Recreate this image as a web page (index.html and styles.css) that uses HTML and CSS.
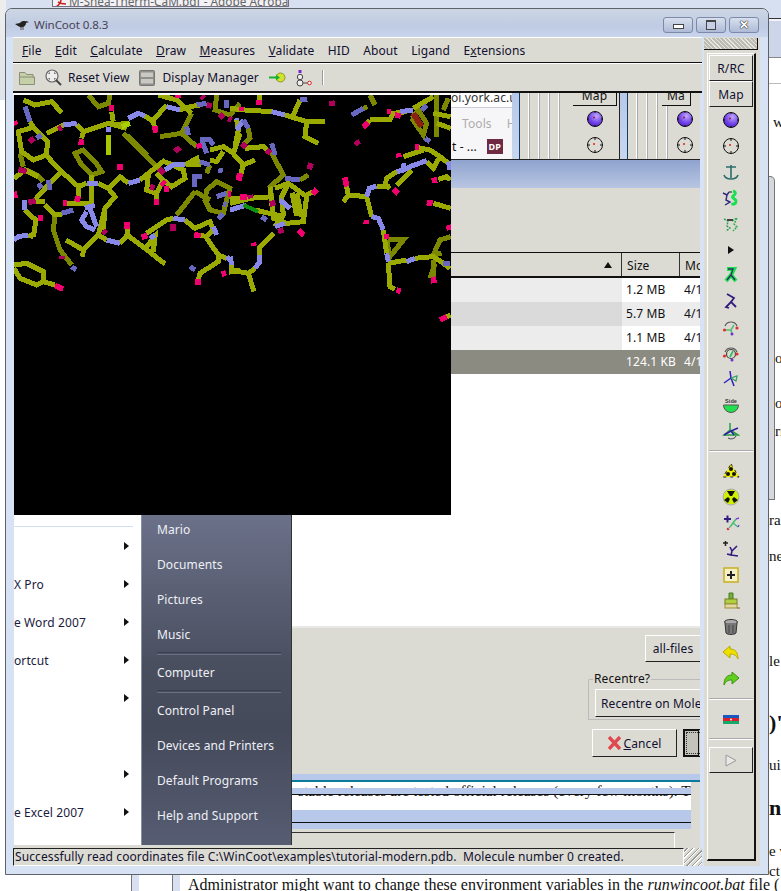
FILE: index.html
```html
<!DOCTYPE html>
<html lang="en">
<head>
    <meta charset="UTF-8">
    <meta name="viewport" content="width=device-width, initial-scale=1.0">
    <title>WinCoot 0.8.3</title>
    <link rel="stylesheet" href="styles.css">
</head>
<body>

<!-- desktop behind the coot window -->
<div class="desk-top"></div>
<div class="desk-left"></div>
<div class="acrobat-tab">
    <svg class="pdf-mark" viewBox="0 0 12 8"><path d="M1 7 C4 5 6 3 6 0 M3 2 C6 4 8 4 11 4" fill="none" stroke="#c8201c" stroke-width="1.6"/></svg>
    <span>M-Shea-Therm-CaM.pdf - Adobe Acrobat</span>
</div>

<div class="doc-edge">
    <div class="edge-strip"></div>
    <div class="edge-line"></div>
    <span class="peek r-w">w</span>
    <div class="edge-panel"></div>
    <span class="peek r-a">oc</span>
    <span class="peek r-b">o</span>
    <span class="peek r-c">rr</span>
    <span class="peek r-d">ra</span>
    <span class="peek r-e">ne</span>
    <span class="peek r-f">le</span>
    <span class="peek r-g big">)'</span>
    <span class="peek r-h">ui</span>
    <span class="peek r-i big">n</span>
    <span class="peek r-j">e v</span>
    <span class="peek r-k">ct</span>
</div>

<div class="doc-bottom">
    <div class="gutter-a"></div>
    <div class="gutter-gap"></div>
    <div class="gutter-b"></div>
    <p>Administrator might want to change these environment variables in the <i>runwincoot.bat</i> file (</p>
</div>

<!-- coot main window -->
<div class="window">
    <div class="titlebar">
        <svg class="bird" viewBox="0 0 14 10"><path d="M0 4 L5 3 C7 0 11 1 14 2 L11 3 C11 6 8 8 5 7 L3 6 Z" fill="#222"/><path d="M6 7 V10 M8 7 V10" stroke="#555"/></svg>
        <span class="title-text">WinCoot 0.8.3</span>
        <div class="win-buttons">
            <div class="win-btn"><span class="ico-min"></span></div>
            <div class="win-btn"><span class="ico-max"></span></div>
            <div class="win-btn"><span class="ico-close">✕</span></div>
        </div>
    </div>

    <div class="window-body">
        <div class="main-col">
            <div class="menubar">
                <span><u>F</u>ile</span>
                <span><u>E</u>dit</span>
                <span><u>C</u>alculate</span>
                <span><u>D</u>raw</span>
                <span><u>M</u>easures</span>
                <span><u>V</u>alidate</span>
                <span>HID</span>
                <span>About</span>
                <span>Ligand</span>
                <span>E<u>x</u>tensions</span>
            </div>

            <div class="toolbar">
                <svg class="tb-folder" viewBox="0 0 16 14"><path d="M0.5 13.5 V1.5 H6 L7.5 3.5 H14 V6 H15.5 V13.5 Z" fill="#c5cfa8" stroke="#8a9078"/><path d="M1 6 H15" stroke="#8a9078"/></svg>
                <svg class="tb-zoom" viewBox="0 0 17 17"><circle cx="7" cy="7" r="6" fill="#eee" stroke="#666" stroke-width="1.2"/><path d="M4 5 V4 H5 M9 4 H10 V5 M10 9 V10 H9 M5 10 H4 V9" fill="none" stroke="#555"/><path d="M11 11 L16 16" stroke="#444" stroke-width="2"/></svg>
                <span class="tb-label reset">Reset View</span>
                <svg class="tb-display" viewBox="0 0 16 16"><rect x="0.5" y="0.5" width="15" height="15" rx="1" fill="#8f8f8c" stroke="#777"/><rect x="2" y="2.5" width="12" height="4.5" fill="#c9c9c4"/><rect x="2" y="9" width="12" height="4.5" fill="#c9c9c4"/></svg>
                <span class="tb-label">Display Manager</span>
                <svg class="tb-go" viewBox="0 0 17 11"><circle cx="11.5" cy="5.5" r="4.5" fill="#d4e030" stroke="#8a9a20"/><path d="M0 5.5 H9" stroke="#18b030" stroke-width="2"/><path d="M7 2.5 L11 5.5 L7 8.5 Z" fill="#18b030"/></svg>
                <svg class="tb-mol" viewBox="0 0 17 18"><circle cx="5" cy="8" r="2.7" fill="#eee" stroke="#444"/><circle cx="5" cy="14" r="3" fill="#eee" stroke="#444"/><path d="M8 14 H13" stroke="#444"/><circle cx="14.5" cy="14" r="1.8" fill="#fff" stroke="#d02020"/><rect x="3.5" y="1" width="3" height="3" fill="#7a20d0"/></svg>
                <div class="tb-sep"></div>
            </div>

            <div class="stage">
                <!-- things seen through the window, top to bottom -->
                <div class="back-strip">
                    <div class="browser-bit">
                        <div class="url">oi.york.ac.u</div>
                        <div class="browser-menu"><span>Tools</span><span>Help</span></div>
                        <div class="browser-tabs"><span>t - ...</span><b class="dp">DP</b><span>Dpr</span></div>
                    </div>
                    <div class="blue-bar"></div>
                    <div class="coot-ghost wide">
                        <div class="ghost-map">Map</div>
                        <svg class="ghost-ico" viewBox="0 0 18 18"><use href="#sphere"/></svg>
                        <svg class="ghost-ico" viewBox="0 0 18 18"><use href="#target"/></svg>
                    </div>
                    <div class="blue-bar"></div>
                    <div class="coot-ghost narrow">
                        <div class="ghost-map">Ma</div>
                        <svg class="ghost-ico" viewBox="0 0 18 18"><use href="#sphere"/></svg>
                        <svg class="ghost-ico" viewBox="0 0 18 18"><use href="#target"/></svg>
                    </div>
                </div>
                <div class="dialog-title"></div>
                <div class="chooser-top"></div>
                <div class="file-head">
                    <div class="fh-name"><span class="sort-up"></span></div>
                    <div class="fh-size">Size</div>
                    <div class="fh-mod">Mo</div>
                </div>
                <div class="file-row"><div class="c-name"></div><div class="c-size">1.2 MB</div><div class="c-mod">4/1</div></div>
                <div class="file-row alt"><div class="c-name"></div><div class="c-size">5.7 MB</div><div class="c-mod">4/1</div></div>
                <div class="file-row"><div class="c-name"></div><div class="c-size">1.1 MB</div><div class="c-mod">4/1</div></div>
                <div class="file-row picked"><div class="c-name"></div><div class="c-size">124.1 KB</div><div class="c-mod">4/1</div></div>
                <div class="file-blank"></div>
                <div class="chooser-foot">
                    <div class="gtk-btn all-files">all-files</div>
                    <fieldset class="recentre">
                        <legend>Recentre?</legend>
                        <div class="gtk-btn recentre-btn">Recentre on Mole</div>
                    </fieldset>
                    <div class="action-row">
                        <div class="gtk-btn cancel">
                            <svg class="cancel-x" viewBox="0 0 13 14"><path d="M1 1 L12 13 M12 1 L1 13" stroke="#e04850" stroke-width="3.4"/></svg>
                            <span><u>C</u>ancel</span>
                        </div>
                        <div class="ok-btn"><div class="ok-focus"></div></div>
                    </div>
                </div>
                <div class="back-stripes">
                    <div class="st-blue a"></div>
                    <div class="st-page">
                        <div class="st-text">stable releases are tested official releases (every few months). T</div>
                        <div class="st-blue b"></div>
                    </div>
                    <div class="st-blue c"></div>
                    <div class="st-blue d"></div>
                    <div class="st-gray"></div>
                </div>

                <!-- molecule view -->
                <svg class="gl-canvas" viewBox="14 95 437 420" shape-rendering="crispEdges">
                    <g transform="translate(10 90) scale(0.3333)" fill="none" stroke-width="15">
                        <g stroke="#7c8900">
                            <path d="M235 15 L265 50 L295 40 L300 15"/>
                            <path d="M195 190 L220 180 L255 215 L275 245 L245 255 L215 225 Z"/>
                            <path d="M340 130 L400 190 L450 240"/><path d="M352 135 L412 195"/>
                            <path d="M450 140 L515 130 L545 70 M515 130 L560 170"/>
                            <path d="M135 375 L130 420 L150 480 L185 525"/>
                            <path d="M555 305 L520 350 L500 375"/>
                            <path d="M590 300 L620 275 L660 295 L650 330 L640 370 L600 360 L585 330 Z"/>
                            <path d="M555 305 L600 330 M590 250 L600 225"/>
                            <path d="M50 240 L85 258 L100 275 M30 190 L40 230"/>
                            <path d="M620 15 L615 60 L660 75 L690 40"/>
                        </g>
                        <g stroke="#9aaa00">
                            <path d="M40 30 L75 45 L125 35 L155 68"/>
                            <path d="M60 95 L70 112 L25 125 L35 185 L70 210 L110 195 L112 155 L70 112"/>
                            <path d="M112 200 L155 245 L205 290 L205 320"/>
                            <path d="M155 245 L110 290 L70 335 M12 265 L45 240 L85 260"/>
                            <path d="M110 130 L160 105 M200 105 L220 125 L295 100 L350 115 M220 125 L215 145"/>
                            <path d="M305 65 L310 95 M300 105 L355 100"/>
                            <path d="M405 78 L430 95 L433 110 M430 90 L470 45 M445 15 L500 30 L545 70"/>
                            <path d="M205 290 L230 280 M245 255 L245 350 M265 280 L295 295 L330 260 L355 280"/>
                            <path d="M390 270 L415 250 L465 210 M295 295 L315 320 L285 355 L280 420"/>
                            <path d="M415 255 L410 300 L440 310 L460 270 L440 250 M440 310 L440 330"/>
                            <path d="M465 215 L520 240 L525 265 L485 290 L460 270 M525 225 L560 205 L565 225 L530 225"/>
                            <path d="M165 340 L245 340 M105 345 L135 375 L155 375 M75 335 L105 335"/>
                            <path d="M45 360 L65 380 L78 390 L70 440 M55 435 L70 440"/>
                            <path d="M168 450 L220 480 L265 435 L285 355 M220 480 L218 500"/>
                            <path d="M265 435 L290 450 M330 460 L352 435 L352 415 M352 435 L405 475 L465 522"/>
                            <path d="M405 475 L435 440 L430 485 M410 430 L470 390 L490 385"/>
                            <path d="M525 390 L555 415 L600 395 L610 420 L590 440 L570 435"/>
                            <path d="M590 445 L625 495 L625 515 L570 550 L565 570 M625 495 L650 505 M665 520 L665 545 L690 540"/>
                            <path d="M12 525 L50 520 L100 545 L100 575 L80 585 L30 565 L12 535 M100 575 L135 585"/>
                            <path d="M660 325 L690 325 M510 60 L540 50 L570 45"/>
                            <path d="M690 130 L670 190 L640 170 L600 180 M640 185 L620 215 L600 210"/>
                        </g>
                        <path d="M295 135 L295 195" stroke="#a8c800" stroke-width="15"/>
                        <path d="M335 110 L360 100" stroke="#a8d000"/>
                        <g stroke="#8888e8">
                            <path d="M160 105 L200 100 M355 85 L385 70 L405 78 M470 50 L490 55 L510 60"/>
                            <path d="M230 280 L265 280 M355 280 L390 270 M465 240 L490 225 L525 225"/>
                            <path d="M45 330 L45 360 M12 450 L25 440 L55 435"/>
                            <path d="M225 355 L255 345 M240 355 L260 410 M230 365 L215 390 L230 410 L255 420"/>
                            <path d="M290 450 L330 460 M420 445 L435 435 M490 385 L525 390 M610 410 L620 435"/>
                            <path d="M650 500 L665 515 M680 85 L685 125 M288 118 L302 118"/>
                        </g>
                        <g stroke="#6868c0">
                            <path d="M45 50 L60 95 M115 270 L120 300 M85 280 L95 295 M155 370 L190 360"/>
                            <path d="M185 530 L198 540 M555 290 L555 260 L575 260 M620 320 L650 310 M640 340 L650 345 M625 385 L640 370"/>
                            <path d="M560 45 L590 40 M650 30 L650 55 M570 150 L600 150 L610 165 M575 150 L590 190 M530 110 L535 135"/>
                            <path d="M570 215 L600 225 M630 235 L632 248 M80 145 L95 135 M540 530 L555 540"/>
                        </g>
                        <g stroke="#f0006e" stroke-width="17">
                            <path d="M305 45 L305 62 M215 148 L213 165 M435 108 L437 128 M330 222 L330 240 M205 318 L200 335"/>
                            <path d="M352 395 L352 416 M440 328 L440 345 M455 275 L465 285 M470 288 L470 305 M395 442 L412 436"/>
                            <path d="M553 435 L572 437 M160 340 L172 340 M85 385 L98 385 M135 587 L160 597 M635 553 L648 548 M565 568 L565 585 M655 312 L662 312 M565 160 L570 175"/>
                            <path d="M12 95 L18 105 M685 255 L688 270 M12 305 L16 325 M505 15 L505 25"/>
                        </g>
                        <g stroke="#b0005c" stroke-width="17">
                            <path d="M58 155 L72 145 M495 185 L510 172 M25 238 L50 245 M55 337 L77 333 M448 235 L462 250 M490 402 L490 422"/>
                            <path d="M278 422 L288 432 M590 45 L605 48 M575 18 L582 25 M628 72 L640 85 M420 290 L434 294 M157 498 L157 508 M655 85 L665 90 M145 118 L155 112"/>
                        </g>
                    </g>
                    <g transform="translate(230 90) scale(0.3333)" fill="none" stroke-width="15">
                        <g stroke="#7c8900">
                            <path d="M55 115 L60 145 L40 165 M120 180 L160 255 L120 290 L125 320 M210 270 L235 255 M420 15 L435 45 M400 55 L412 50"/>
                            <path d="M545 85 L580 135 L590 100 L565 60 L545 85 M620 15 L620 140 M655 25 L640 60"/>
                            <path d="M475 450 L520 450 L480 500 L470 450 M662 440 L630 450 L610 495 L635 490 M610 510 L610 570"/>
                            <path d="M600 565 L615 520"/>
                        </g>
                        <g stroke="#9aaa00">
                            <path d="M0 55 L45 60 L125 65 M165 75 L230 95 L285 95 M230 95 L225 140 L265 160 M190 75 L210 30 M88 15 L88 30"/>
                            <path d="M20 90 L25 120 L15 170 M45 175 L100 170 L115 185 M0 180 L40 225 L75 210 M40 225 L33 250"/>
                            <path d="M135 295 L175 280 L230 320 L220 395 L170 400 L130 385 L120 290 M230 315 L250 305 M175 280 L155 320 L160 375 L135 410 M200 310 L215 380 M186 308 L200 378"/>
                            <path d="M0 340 L60 325 L130 320 M75 360 L160 380 M130 430 L90 470 L90 495 M55 550 L0 540 M75 535 L55 550 L72 605"/>
                            <path d="M350 290 L355 315 L340 335 M355 315 L410 320 L425 380 M440 288 L480 290"/>
                            <path d="M460 420 L470 490 M475 520 L480 590 L495 598 M475 520 L530 510 M555 505 L610 500 L640 520 L660 535"/>
                            <path d="M420 90 L480 88 L490 70 L530 65 M400 110 L420 90 M550 55 L610 20 M620 100 L662 115 M610 70 L662 80"/>
                            <path d="M560 172 L600 180 L630 200 L610 235 L590 215 M630 200 L655 220 M520 200 L580 180"/>
                            <path d="M500 245 L470 265 L465 285 L480 295 M545 240 L500 285 M625 268 L650 260 L662 270 M610 340 L662 355 M650 680 L662 675"/>
                        </g>
                        <g stroke="#8888e8">
                            <path d="M125 65 L165 75 M20 120 L40 90 M0 360 L50 345 M150 330 L180 355 M135 410 L165 400 M90 495 L90 515 L75 535 M0 500 L5 525"/>
                            <path d="M410 320 L418 295 L440 288 M425 380 L445 385 L460 420 M470 490 L475 515 M530 515 L555 505 M510 65 L550 60"/>
                            <path d="M655 215 L660 240 M590 212 L545 228 L520 240 L500 245 M520 220 L522 238"/>
                        </g>
                        <g stroke="#6868c0">
                            <path d="M40 90 L55 115 M125 160 L135 195 M165 265 L210 270 M365 75 L400 55 M585 145 L600 155 M575 60 L590 45 M660 520 L640 520 M95 380 L110 390"/>
                            <path d="M210 30 L232 28"/>
                        </g>
                        <path d="M40 345 L85 365" stroke="#109010" stroke-width="12"/>
                        <path d="M550 70 L575 110" stroke="#8a2010" stroke-width="18"/>
                        <g stroke="#f0006e" stroke-width="17">
                            <path d="M35 50 L35 62 M88 30 L88 45 M30 250 L28 272 M30 322 L52 320 M70 458 L72 468 M205 420 L222 435 M260 298 L248 312"/>
                            <path d="M345 262 L350 290 M400 112 L415 98 M470 65 L482 65 M495 75 L512 78 M410 390 L408 402 M462 440 L478 440 M490 298 L505 310 M500 600 L512 604"/>
                            <path d="M555 172 L567 172 M505 190 L507 202 M605 272 L622 270 M590 338 L608 340 M655 405 L660 420 M630 690 L650 680 M610 560 L612 580"/>
                        </g>
                        <g stroke="#b0005c" stroke-width="17">
                            <path d="M36 172 L48 160 M110 180 L122 190 M243 220 L237 238 M60 315 L62 325 M125 332 L130 348 M150 415 L155 430 M305 32 L307 48 M378 152 L386 165"/>
                        </g>
                    </g>
                </svg>

                <!-- start menu bit -->
                <div class="start-menu">
                    <div class="start-left">
                        <div class="start-rule"></div>
                        <div class="start-row"><span></span><i></i></div>
                        <div class="start-row"><span>X Pro</span><i></i></div>
                        <div class="start-row"><span>e Word 2007</span><i></i></div>
                        <div class="start-row"><span>ortcut</span><i></i></div>
                        <div class="start-row"><span></span><i></i></div>
                        <div class="start-row"><span></span></div>
                        <div class="start-row"><span></span><i></i></div>
                        <div class="start-row"><span>e Excel 2007</span><i></i></div>
                    </div>
                    <div class="start-right">
                        <div class="start-item first">Mario</div>
                        <div class="start-item">Documents</div>
                        <div class="start-item">Pictures</div>
                        <div class="start-item">Music</div>
                        <div class="start-line"></div>
                        <div class="start-item">Computer</div>
                        <div class="start-line"></div>
                        <div class="start-item">Control Panel</div>
                        <div class="start-item">Devices and Printers</div>
                        <div class="start-item">Default Programs</div>
                        <div class="start-item">Help and Support</div>
                    </div>
                </div>
            </div>

            <div class="statusbar">
                <div class="status-text">Successfully read coordinates file C:\WinCoot\examples\tutorial-modern.pdb.&nbsp; Molecule number 0 created.</div>
                <div class="grip"></div>
            </div>
        </div>

        <!-- right hand tool column -->
        <div class="side-col">
            <div class="dock-handle"></div>
            <div class="side-box">
                <div class="gtk-btn side-btn">R/RC</div>
                <div class="gtk-btn side-btn">Map</div>

                <div class="tool"><svg viewBox="0 0 18 18"><defs>
                    <radialGradient id="ball" cx="0.6" cy="0.3" r="0.8"><stop offset="0" stop-color="#c0a8ff"/><stop offset="0.6" stop-color="#7040e8"/><stop offset="1" stop-color="#4818c0"/></radialGradient>
                    <g id="sphere"><circle cx="9" cy="9" r="7.5" fill="url(#ball)" stroke="#111"/><path d="M9 1 V3 M9 15 V17 M1 9 H3 M15 9 H17" stroke="#111"/><circle cx="8" cy="7.5" r="1" fill="#a02040"/></g>
                    <g id="target"><circle cx="9" cy="9" r="7.5" fill="#dcdcd4" stroke="#111"/><path d="M9 1 V4 M9 14 V17 M1 9 H4 M14 9 H17" stroke="#111"/><circle cx="8" cy="8" r="1" fill="#e02010"/></g>
                </defs><use href="#sphere"/></svg></div>
                <div class="tool"><svg viewBox="0 0 18 18"><use href="#target"/></svg></div>
                <div class="tool"><svg viewBox="0 0 18 18"><path d="M4 4 H14 M9 2 V15 M2 12 C3 15 6 16 9 16 C12 16 15 15 16 12" fill="none" stroke="#2c6e68" stroke-width="1.6"/></svg></div>
                <div class="tool"><svg viewBox="0 0 18 18"><path d="M1 4 L5 6 L7 3 M5 6 L4 11 L8 13 L3 16" fill="none" stroke="#302880" stroke-width="1.4"/><path d="M11 2 C15 3 13 6 11 7 C9 9 14 10 14 12 C14 15 11 16 10 14" fill="none" stroke="#18e050" stroke-width="3"/><path d="M7 3 H10" stroke="#555" stroke-width="1.5"/></svg></div>
                <div class="tool"><svg viewBox="0 0 18 18"><path d="M2 4 L6 6 L5 11 L8 13 L4 16" fill="none" stroke="#30a050" stroke-width="1.5" stroke-dasharray="2 1"/><path d="M10 6 L15 3 L12 9 L15 12 L11 16" fill="none" stroke="#30b050" stroke-width="1.5" stroke-dasharray="2 1"/><path d="M5 5 H11" stroke="#444" stroke-width="2"/></svg></div>
                <div class="tool short"><svg viewBox="0 0 18 18"><path d="M6 5 L12 9 L6 13 Z" fill="#111"/></svg></div>
                <div class="tool"><svg viewBox="0 0 18 18"><path d="M5 3 L12 3 L9 9 L14 15 M9 9 L4 15" fill="none" stroke="#18e050" stroke-width="4"/><path d="M6 3 L11 3 L9 9 L13 14 M9 9 L5 14" fill="none" stroke="#303060" stroke-width="1.3"/></svg></div>
                <div class="tool"><svg viewBox="0 0 18 18"><path d="M5 2 L12 6 L9 10 L14 15 M9 10 L4 15 L7 16" fill="none" stroke="#301c80" stroke-width="1.8"/></svg></div>
                <div class="tool"><svg viewBox="0 0 18 18"><path d="M3 8 A6.5 6.5 0 0 1 15 8" fill="none" stroke="#555" stroke-width="1.2"/><path d="M12 7 L9 12 L4 12 M9 12 L10 16" fill="none" stroke="#50c070" stroke-width="1.5"/><circle cx="2.5" cy="12" r="1.6" fill="#e03030"/><circle cx="15" cy="10" r="1.6" fill="#e03030"/><circle cx="10" cy="16" r="1.5" fill="#7030d0"/></svg></div>
                <div class="tool"><svg viewBox="0 0 18 18"><path d="M3 8 A6.5 6.5 0 0 1 15 8" fill="none" stroke="#555" stroke-width="1.2"/><circle cx="9" cy="10" r="4.5" fill="none" stroke="#444" stroke-width="1.2"/><path d="M11 7 L8 13" stroke="#30c060" stroke-width="1.8"/><circle cx="2.5" cy="12" r="1.6" fill="#e03030"/><circle cx="15" cy="10" r="1.6" fill="#e03030"/><circle cx="10" cy="16" r="1.5" fill="#7030d0"/></svg></div>
                <div class="tool"><svg viewBox="0 0 18 18"><path d="M8 1 L9 8 L2 13 M9 8 L12 16" fill="none" stroke="#3020c0" stroke-width="1.5"/><path d="M9 8 L15 6 L14 11 L9 8" fill="none" stroke="#30a060" stroke-width="1.2"/></svg></div>
                <div class="tool"><svg viewBox="0 0 18 18"><path d="M1.5 9 A7.5 7.5 0 0 0 16.5 9 Z" fill="#20e050" stroke="#555"/><text x="9" y="7" class="side-word">Side</text></svg></div>
                <div class="tool"><svg viewBox="0 0 18 18"><path d="M8 1 L8 8 L2 13 H16 L8 8" fill="none" stroke="#20a040" stroke-width="1.5"/><path d="M2 13 L9 9 L16 6 M9 9 L12 13" fill="none" stroke="#3020a0" stroke-width="1.5"/><path d="M14 14 A5 4 0 0 1 6 16" fill="none" stroke="#444"/></svg></div>

                <div class="side-rule"></div>

                <div class="tool"><svg viewBox="0 0 18 18"><path d="M9 2 L17 15 H1 Z" fill="#f0f000" stroke="#222" stroke-dasharray="3 4"/><circle cx="9" cy="7" r="2" fill="#111"/><circle cx="6" cy="12" r="2" fill="#111"/><circle cx="12" cy="12" r="2" fill="#111"/></svg></div>
                <div class="tool"><svg viewBox="0 0 18 18"><circle cx="9" cy="9" r="8" fill="#d0f000" stroke="#aab"/><path d="M5 3 L13 3 L10 8 H8 Z M2 12 L6 9 L8 11 L6 15 Z M16 12 L12 9 L10 11 L12 15 Z" fill="#111"/></svg></div>
                <div class="tool"><svg viewBox="0 0 18 18"><path d="M2 5 H9 M5.5 1.5 V8.5" stroke="#301c80" stroke-width="2"/><path d="M8 13 L11 9 L14 5 M11 9 L16 13" fill="none" stroke="#40c070" stroke-width="1.5"/><path d="M14 5 L17 4 M16 13 L17 11" stroke="#8040e0" stroke-width="1.5"/><circle cx="6" cy="15" r="1.3" fill="#e03030"/><path d="M6 15 L8 13" stroke="#888"/></svg></div>
                <div class="tool"><svg viewBox="0 0 18 18"><path d="M1 3 H6 M3.5 1 V6" stroke="#222" stroke-width="1.5"/><path d="M8 7 L10 11 L15 6 M10 11 L9 15 L5 14 M9 15 L16 16" fill="none" stroke="#301c80" stroke-width="1.6"/></svg></div>
                <div class="tool"><svg viewBox="0 0 18 18"><rect x="2" y="2" width="14" height="14" fill="#f4f0c8" stroke="#c8b020" stroke-width="1.5"/><path d="M5 9 H13 M9 5 V13" stroke="#222" stroke-width="2"/></svg></div>
                <div class="tool"><svg viewBox="0 0 18 18"><path d="M7 1 H11 V7 H7 Z" fill="#70b040" stroke="#4a7a20"/><rect x="3" y="7" width="12" height="5" fill="#b0d040" stroke="#708020"/><rect x="3" y="12" width="12" height="4" fill="#e0d8a0" stroke="#a09040"/><path d="M15 16 H18" stroke="#806020"/></svg></div>
                <div class="tool"><svg viewBox="0 0 18 18"><ellipse cx="9" cy="4" rx="6.5" ry="2.5" fill="#aaa" stroke="#333"/><path d="M3 5 L4 15 C6 17 12 17 14 15 L15 5" fill="#777" stroke="#333"/><path d="M7 7 V15 M11 7 V15" stroke="#444"/></svg></div>
                <div class="tool"><svg viewBox="0 0 18 18"><path d="M1 8 L8 2 V5 C13 5 16 8 16 15 C14 11 12 10 8 10 V14 Z" fill="#f0e000" stroke="#b8a800"/></svg></div>
                <div class="tool"><svg viewBox="0 0 18 18"><path d="M17 8 L10 2 V5 C5 5 2 8 2 15 C4 11 6 10 10 10 V14 Z" fill="#60d020" stroke="#409010"/></svg></div>

                <div class="side-rule"></div>

                <div class="tool"><svg viewBox="0 0 18 18"><rect x="1" y="5" width="16" height="3" fill="#1858c0"/><rect x="1" y="8" width="16" height="3" fill="#d82030"/><rect x="1" y="11" width="16" height="3" fill="#18a868"/><circle cx="9" cy="9.5" r="1" fill="#eee"/></svg></div>

                <div class="side-rule last"></div>

                <div class="gtk-btn side-play"><svg viewBox="0 0 12 13"><path d="M1 1 L11 6.5 L1 12 Z" fill="#e8e8e4" stroke="#999"/></svg></div>
            </div>
        </div>
    </div>
</div>

</body>
</html>
```

FILE: styles.css
```css
/* whole picture is a desktop with overlapping windows, so windows are placed by hand */
body {
    margin: 0;
    width: 781px;
    height: 891px;
    position: relative;
    overflow: hidden;
    background-color: #fff;
    font-family: "Noto Sans", sans-serif;
    font-size: 12px;
    letter-spacing: 0.1px;
    color: #111;
}

u {
    text-underline-offset: 1px;
}

/* behind the window */
.desk-top {
    position: absolute;
    left: 0;
    top: 0;
    width: 781px;
    height: 12px;
    background-color: #d6e0f0;
}

.desk-left {
    position: absolute;
    left: 0;
    top: 0;
    width: 6px;
    height: 100px;
    background: linear-gradient(#eee, #dfe3ea);
}

.acrobat-tab {
    position: absolute;
    left: 52px;
    top: -6px;
    width: 237px;
    height: 13px;
    display: flex;
    align-items: center;
    gap: 2px;
    padding-left: 2px;
    box-sizing: border-box;
    background-color: #f2f2f6;
    border: 1px solid #77707a;
    color: #666;
    font-size: 11.8px;
    letter-spacing: 0;
    white-space: nowrap;
    overflow: hidden;
}

.pdf-mark {
    width: 12px;
    height: 8px;
    margin-top: 6px;
    flex: none;
}

.doc-edge {
    position: absolute;
    left: 768px;
    top: 0;
    width: 13px;
    height: 891px;
    overflow: hidden;
    font-family: "Liberation Serif", serif;
    font-size: 15px;
}

.edge-strip {
    height: 57px;
    background: linear-gradient(#d6e0f0 18px, #333 18px, #333 19px, #f0f2f8 19px, #f0f2f8 21px, #ccd6e8 21px);
    border-bottom: 1px solid #888;
}

.edge-line {
    margin-top: 25px;
    height: 1px;
    background-color: #bbb;
}

.edge-panel {
    position: absolute;
    left: 0;
    top: 176px;
    width: 7px;
    height: 324px;
    background-color: #d6d8de;
    border: 1px solid #777;
    border-left: none;
    border-radius: 0 5px 0 0;
    box-sizing: border-box;
}

.peek {
    position: absolute;
    left: 1px;
    line-height: 16px;
    white-space: nowrap;
}

.peek.big {
    font-weight: bold;
    font-size: 22px;
}

.r-w { top: 114px; left: 5px; }
.r-a { top: 350px; left: 7px; }
.r-b { top: 395px; left: 7px; }
.r-c { top: 423px; left: 7px; }
.r-d { top: 512px; }
.r-e { top: 548px; }
.r-f { top: 653px; }
.r-g { top: 715px; }
.r-h { top: 757px; }
.r-i { top: 800px; }
.r-j { top: 843px; }
.r-k { top: 866px; line-height: 11px; }

.doc-bottom {
    position: absolute;
    left: 0;
    top: 874px;
    width: 781px;
    height: 17px;
    display: flex;
    overflow: hidden;
}

.gutter-a {
    width: 7px;
    flex: none;
    margin-left: 131px;
    background-color: #d8e0f2;
    border-left: 1px solid #777;
}

.gutter-gap {
    width: 33px;
    flex: none;
}

.gutter-b {
    width: 7px;
    flex: none;
    background-color: #d8e0f2;
    border-left: 1px solid #777;
}

.doc-bottom p {
    margin: 0 0 0 8px;
    padding-top: 4px;
    font-family: "Liberation Serif", serif;
    font-size: 16px;
    letter-spacing: 0;
    line-height: 13px;
    white-space: nowrap;
}

/* coot window */
.window {
    position: absolute;
    left: 5px;
    top: 8px;
    width: 764px;
    height: 867px;
    box-sizing: border-box;
    display: flex;
    flex-direction: column;
    background-color: #d8e2f5;
    border: 1px solid #5c6268;
    border-radius: 7px 7px 0 0;
}

.titlebar {
    height: 28px;
    flex: none;
    display: flex;
    align-items: center;
    padding: 3px 0 0 9px;
    box-sizing: border-box;
    background: linear-gradient(#cdd6e5, #bfcbe2 60%, #c8d5ec);
    border-radius: 6px 6px 0 0;
}

.bird {
    width: 14px;
    height: 10px;
}

.title-text {
    margin-left: 5px;
    font-size: 11.6px;
    letter-spacing: -0.1px;
    color: #4a4356;
}

.win-buttons {
    margin-left: auto;
    margin-right: 9px;
    display: flex;
    gap: 3px;
}

.win-btn {
    width: 30px;
    height: 16px;
    box-sizing: border-box;
    display: flex;
    align-items: center;
    justify-content: center;
    border: 1px solid #7d89a8;
    border-radius: 3px;
    background: linear-gradient(#d8e0ee, #aebbd6);
}

.ico-min {
    width: 9px;
    height: 3px;
    margin-top: 3px;
    border: 1px solid #444;
    background-color: #fff;
}

.ico-max {
    width: 8px;
    height: 7px;
    border: 1px solid #444;
    border-top-width: 2px;
    background-color: #c6d0e6;
    box-sizing: content-box;
}

.ico-close {
    font-size: 12px;
    font-weight: bold;
    line-height: 12px;
    color: #fff;
    text-shadow: 0 0 1px #222, 0 0 1px #222, 0 0 1px #222;
}

.window-body {
    flex: 1;
    display: flex;
    min-height: 0;
    padding: 0 8px 8px 7px;
}

.main-col {
    width: 689px;
    display: flex;
    flex-direction: column;
}

.menubar {
    height: 26px;
    flex: none;
    display: flex;
    align-items: center;
    gap: 13.4px;
    padding-left: 9px;
    background-color: #dcdbd3;
    border-top: 1px solid #fff;
    border-bottom: 1px solid #111;
    box-sizing: border-box;
    color: #101030;
}

.toolbar {
    height: 30px;
    flex: none;
    display: flex;
    align-items: center;
    padding-left: 6px;
    background-color: #dcdbd3;
    border-top: 1px solid #fff;
    border-bottom: 2px solid #111;
    box-sizing: border-box;
    color: #101030;
}

.tb-folder { width: 16px; height: 14px; }
.tb-zoom { width: 17px; height: 17px; margin-left: 10px; }
.tb-label { margin-left: 7px; }
.tb-label.reset { margin-left: 6px; margin-right: 10px; }
.tb-display { width: 16px; height: 16px; }
.tb-go { width: 17px; height: 11px; margin-left: 10px; }
.tb-mol { width: 17px; height: 18px; margin-left: 9px; }

.tb-sep {
    width: 1px;
    height: 15px;
    margin-left: 10px;
    background-color: #999;
    border-right: 1px solid #fff;
}

.stage {
    position: relative;
    flex: 1;
    min-height: 0;
    margin-right: 2px;
    display: flex;
    flex-direction: column;
    background-color: #dcdbd3;
    overflow: hidden;
}

/* stuff seen behind the molecule view */
.back-strip {
    height: 67px;
    flex: none;
    display: flex;
    background-color: #fff;
    padding-left: 438px;
    border-bottom: 1px solid #222;
    box-sizing: border-box;
}

.browser-bit {
    width: 61px;
    flex: none;
    overflow: hidden;
    background-color: #f6f6f8;
    white-space: nowrap;
}

.url {
    height: 14px;
    line-height: 10px;
    background-color: #fff;
    color: #333;
    border-bottom: 1px solid #ccd;
    overflow: hidden;
}

.browser-menu {
    height: 30px;
    display: flex;
    align-items: center;
    gap: 15px;
    padding-left: 11px;
    color: #b0acae;
}

.browser-tabs {
    display: flex;
    align-items: center;
    gap: 10px;
    padding-left: 1px;
}

.dp {
    flex: none;
    width: 16px;
    height: 15px;
    line-height: 15px;
    text-align: center;
    background-color: #6e2a40;
    color: #fff;
    font-size: 9px;
}

.blue-bar {
    width: 8px;
    flex: none;
    background: linear-gradient(#b8c8e8, #c8d6f0);
    border-right: 1px solid #104060;
    box-sizing: border-box;
}

.coot-ghost {
    display: flex;
    flex-direction: column;
    align-items: flex-end;
    background-color: #dcdbd3;
    overflow: hidden;
    border-right: 1px solid #222;
    box-sizing: border-box;
    background-image: repeating-linear-gradient(90deg, transparent 0, transparent 8px, #fff 8px, #fff 9px, #aaa 9px, #aaa 10px);
    background-size: 42px 100%;
    background-repeat: no-repeat;
}

.coot-ghost.wide {
    width: 100px;
    flex: none;
    padding-right: 2px;
}

.coot-ghost.narrow {
    width: 72px;
    flex: none;
    padding-right: 0;
    border-right: none;
}

.ghost-map {
    width: 44px;
    height: 13px;
    line-height: 5px;
    flex: none;
    text-align: center;
    background-color: #dcdbd3;
    border-bottom: 1px solid #111;
    border-right: 1px solid #111;
    box-sizing: border-box;
    overflow: hidden;
}

.narrow .ghost-map {
    width: 29px;
    margin-right: 9px;
}

.ghost-ico {
    width: 18px;
    height: 18px;
    margin: 4px 13px 4px 0;
    flex: none;
}

.narrow .ghost-ico {
    margin-right: 6px;
}

.dialog-title {
    height: 28px;
    flex: none;
    background: linear-gradient(#8fa3cf, #b9c6e2);
}

.chooser-top {
    height: 64px;
    flex: none;
    background-color: #dcdbd3;
}

.file-head {
    height: 26px;
    flex: none;
    display: flex;
    border-top: 1px solid #111;
    border-bottom: 2px solid #111;
    box-sizing: border-box;
    line-height: 25px;
}

.fh-name {
    width: 609px;
    flex: none;
    position: relative;
    border-right: 1px solid #333;
    box-sizing: border-box;
}

.sort-up {
    position: absolute;
    left: 591px;
    top: 9px;
    border: 4px solid transparent;
    border-top: none;
    border-bottom: 6px solid #111;
}

.fh-size {
    width: 58px;
    flex: none;
    padding-left: 5px;
    border-right: 1px solid #333;
    box-sizing: border-box;
}

.fh-mod {
    padding-left: 5px;
}

.file-row {
    height: 24px;
    flex: none;
    display: flex;
    line-height: 24px;
    background-color: #fff;
}

.c-name {
    width: 609px;
    flex: none;
    background-color: #ececec;
}

.c-size {
    width: 58px;
    flex: none;
    padding-left: 4px;
    box-sizing: border-box;
}

.c-mod {
    padding-left: 4px;
}

.file-row.alt {
    background-color: #ececec;
}

.file-row.alt .c-name {
    background-color: #dadada;
}

.file-row.picked,
.file-row.picked .c-name {
    background-color: #8c8b82;
    color: #fff;
}

.file-blank {
    height: 254px;
    flex: none;
    background-color: #fff;
    border-bottom: 2px solid #e8e8e4;
    box-sizing: border-box;
}

.chooser-foot {
    height: 146px;
    flex: none;
    display: flex;
    flex-direction: column;
    align-items: flex-end;
    padding-top: 7px;
    box-sizing: border-box;
    background-color: #dcdbd3;
}

.gtk-btn {
    display: flex;
    align-items: center;
    justify-content: center;
    box-sizing: border-box;
    background-color: #dcdbd3;
    border-top: 1px solid #fff;
    border-left: 1px solid #fff;
    border-right: 1px solid #222;
    border-bottom: 1px solid #222;
    color: #101030;
}

.all-files {
    width: 55px;
    height: 27px;
    border-right: none;
}

.recentre {
    width: 112px;
    height: 47px;
    margin: 11px 0 0;
    padding: 4px 0 0 6px;
    box-sizing: border-box;
    border: 1px solid #bbb;
    border-right: none;
    border-top-left-radius: 2px;
}

.recentre legend {
    padding: 0 1px;
    margin-left: -2px;
    line-height: 12px;
}

.recentre-btn {
    width: 105px;
    height: 28px;
    white-space: nowrap;
    justify-content: flex-start;
    padding-left: 5px;
    overflow: hidden;
    border-right: none;
}

.action-row {
    display: flex;
    gap: 6px;
    margin-top: 9px;
}

.cancel {
    width: 85px;
    height: 28px;
    gap: 3px;
}

.cancel-x {
    width: 13px;
    height: 14px;
}

.ok-btn {
    width: 17px;
    height: 28px;
    padding: 2px 0 2px 2px;
    box-sizing: border-box;
    background-color: #c4c3bb;
    border: 1px solid #111;
    border-right: none;
    outline: 1px solid #111;
    outline-offset: -2px;
}

.ok-focus {
    height: 100%;
    border: 1px dotted #333;
    border-right: none;
    box-sizing: border-box;
}

.back-stripes {
    flex: 1;
    padding-right: 9px;
    background-color: #dcdbd3;
}

.st-blue.a {
    height: 8px;
    box-sizing: border-box;
    margin-right: -9px;
    background-color: #b8c8ea;
    border-bottom: 2px solid #0c7a9a;
}

.st-page {
    height: 28px;
    position: relative;
    overflow: hidden;
    background-color: #fff;
}

.st-text {
    padding: 1px 0 0 285px;
    line-height: 16px;
    font-family: "Liberation Serif", serif;
    font-size: 15.4px;
    letter-spacing: 0;
    white-space: nowrap;
}

/* this stripe runs across the line of text */
.st-blue.b {
    position: absolute;
    left: 0;
    right: 0;
    top: 6px;
    height: 7px;
    box-sizing: border-box;
    background-color: #b8c8ea;
    border-bottom: 1px solid #111;
}

.st-blue.c {
    height: 13px;
    box-sizing: border-box;
    background-color: #b8c8ea;
    border-bottom: 1px solid #111;
}

.st-blue.d {
    height: 6px;
    background-color: #b8c8ea;
}

.st-gray {
    height: 16px;
    margin-right: 16px;
    margin-top: 3px;
    border-top: 1px solid #333;
    border-right: 1px solid #fff;
}

.gl-canvas {
    position: absolute;
    left: 0;
    top: 2px;
    width: 437px;
    height: 420px;
    border-left: 1px solid #d8e2f5;
    background-color: #000;
}

/* start menu */
.start-menu {
    position: absolute;
    left: 0;
    top: 422px;
    width: 279px;
    height: 333px;
    display: flex;
    border-left: 1px solid #d8e2f5;
    box-sizing: border-box;
}

.start-left {
    width: 127px;
    flex: none;
    height: 330px;
    background-color: #fff;
    padding-top: 11px;
    box-sizing: border-box;
    color: #1a1a40;
}

.start-rule {
    width: 119px;
    height: 1px;
    background-color: #d2e0f2;
}

.start-row {
    height: 38px;
    display: flex;
    align-items: center;
    justify-content: space-between;
    padding-right: 12px;
}

.start-row i {
    border: 4px solid transparent;
    border-right: none;
    border-left: 5px solid #111;
    margin-left: auto;
}

.start-right {
    flex: 1;
    height: 330px;
    padding-left: 15px;
    box-sizing: border-box;
    background: linear-gradient(#6b7189, #4a4f60 45%, #454a5a 65%, #565c72);
    border-left: 1px solid #8a90a4;
    border-right: 1px solid #333;
    color: #eef0f6;
}

.start-item {
    height: 35px;
    line-height: 35px;
}

.start-item.first {
    height: 32px;
    line-height: 29px;
}

.start-line {
    height: 3px;
    width: 124px;
    box-sizing: border-box;
    border-top: 1px solid #3c404e;
    border-bottom: 1px solid #6a6f82;
}

.statusbar {
    height: 18px;
    flex: none;
    display: flex;
    background-color: #dcdbd3;
}

.status-text {
    flex: 1;
    padding-left: 1px;
    line-height: 16px;
    border-top: 1px solid #222;
    border-left: 1px solid #222;
    border-bottom: 1px solid #fff;
    border-right: 1px solid #fff;
    box-sizing: border-box;
    white-space: pre;
    color: #101030;
    overflow: hidden;
}

.grip {
    width: 18px;
    flex: none;
    background: repeating-linear-gradient(135deg, #dcdbd3 0, #dcdbd3 2px, #999 2px, #999 3px, #fff 3px, #fff 4px);
}

/* tool column */
.side-col {
    flex: 1;
    margin-left: 2px;
    background-color: #dcdbd3;
    display: flex;
    flex-direction: column;
    padding: 1px 2px 5px 0;
    box-sizing: border-box;
}

.dock-handle {
    height: 11px;
    flex: none;
    background: repeating-linear-gradient(45deg, #e6e5df 0, #e6e5df 1px, #bdbcb5 1px, #bdbcb5 3px);
    border-right: 1px solid #111;
    border-bottom: 1px solid #111;
}

.side-box {
    flex: 1;
    margin: 3px 0 0 3px;
    padding: 1px 1px 0 1px;
    width: 49px;
    box-sizing: border-box;
    display: flex;
    flex-direction: column;
    align-items: center;
    border-top: 1px solid #fff;
    border-left: 1px solid #fff;
    border-right: 2px solid #111;
    border-bottom: 2px solid #111;
}

.side-btn {
    width: 44px;
    height: 26px;
    flex: none;
}

.tool {
    height: 26px;
    flex: none;
    display: flex;
    align-items: center;
    justify-content: center;
}

.tool.short {
    height: 25px;
}

.tool svg {
    width: 18px;
    height: 18px;
}

.side-word {
    font-family: "Liberation Sans", sans-serif;
    font-size: 5.5px;
    font-weight: bold;
    text-anchor: middle;
    fill: #333;
}

.side-rule {
    width: 44px;
    height: 1px;
    flex: none;
    margin: 6px 0;
    background-color: #aaa;
    border-bottom: 1px solid #fff;
}

.side-rule.last {
    margin: 6px 0 7px;
}

.side-play {
    width: 44px;
    height: 26px;
    flex: none;
}

.side-play svg {
    width: 12px;
    height: 13px;
}
```
